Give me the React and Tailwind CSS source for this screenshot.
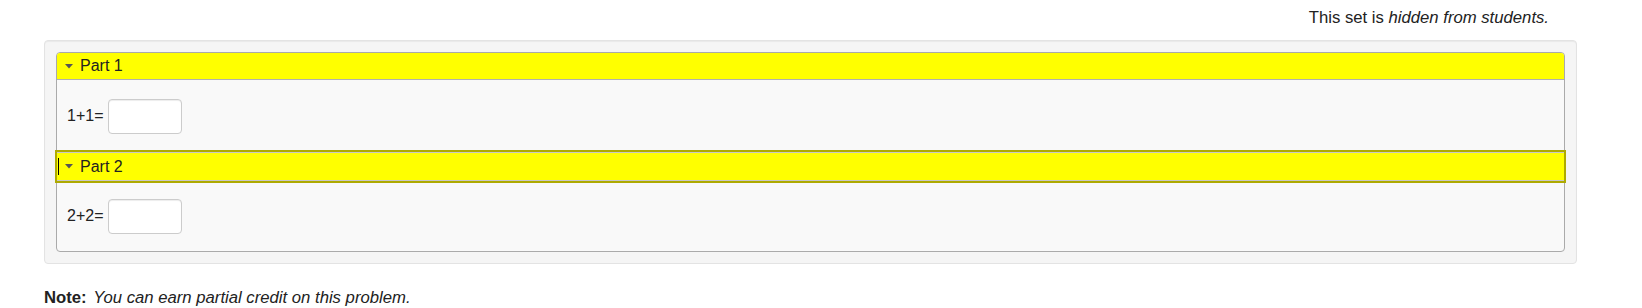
import React from "react";

function Tri() {
  return (
    <svg width="8" height="5" viewBox="0 0 8 5" className="shrink-0">
      <polygon points="0,0 8,0 4,4.5" fill="#555555" />
    </svg>
  );
}

export default function App() {
  const font = { fontFamily: '"Liberation Sans", Arial, sans-serif' };
  return (
    <div className="w-[1642px] h-[308px] bg-white text-[#222] text-[16px]" style={font}>
      <div className="ml-[44px] w-[1533px]">
        <div className="pt-[6px] leading-[24px] flex justify-end pr-[28px] text-[16.7px]">
          <span>
            This set is <i>hidden from students.</i>
          </span>
        </div>
        <div className="mt-[10px] border border-[#e3e3e3] bg-[#f5f5f5] rounded-[4px] p-[11px] shadow-[inset_0_1px_1px_rgba(0,0,0,0.05)]">
          <div className="border border-[#aaaaaa] rounded-[4px] bg-[#f9f9f9]">
            <div className="h-[27px] bg-[#ffff00] border-b border-[#b0b0b0] rounded-t-[3px] flex items-center pl-[8px] gap-[7px]">
              <Tri />
              <span className="leading-[20px]">Part 1</span>
            </div>
            <div className="h-[72px] flex items-center pl-[10px]">
              <span>1+1=</span>
              <div className="ml-[5px] w-[74px] h-[35px] bg-white border border-[#cccccc] rounded-[4px] shadow-[inset_0_1px_1px_rgba(0,0,0,0.075)]"></div>
            </div>
            <div className="relative h-[29px] bg-[#ffff00] border-y border-[#c8c8c8] outline-2 outline-solid outline-[#aeaa00] flex items-center pl-[8px] gap-[7px]">
              <span className="absolute left-[1px] top-[5px] w-px h-[17px] bg-black"></span>
              <Tri />
              <span className="leading-[20px]">Part 2</span>
            </div>
            <div className="h-[70px] flex items-center pl-[10px]">
              <span>2+2=</span>
              <div className="ml-[5px] w-[74px] h-[35px] bg-white border border-[#cccccc] rounded-[4px] shadow-[inset_0_1px_1px_rgba(0,0,0,0.075)]"></div>
            </div>
          </div>
        </div>
        <div className="mt-[22px] leading-[24px] text-[16.7px]">
          <b>Note:</b> <i className="ml-[2px]">You can earn partial credit on this problem.</i>
        </div>
      </div>
    </div>
  );
}
